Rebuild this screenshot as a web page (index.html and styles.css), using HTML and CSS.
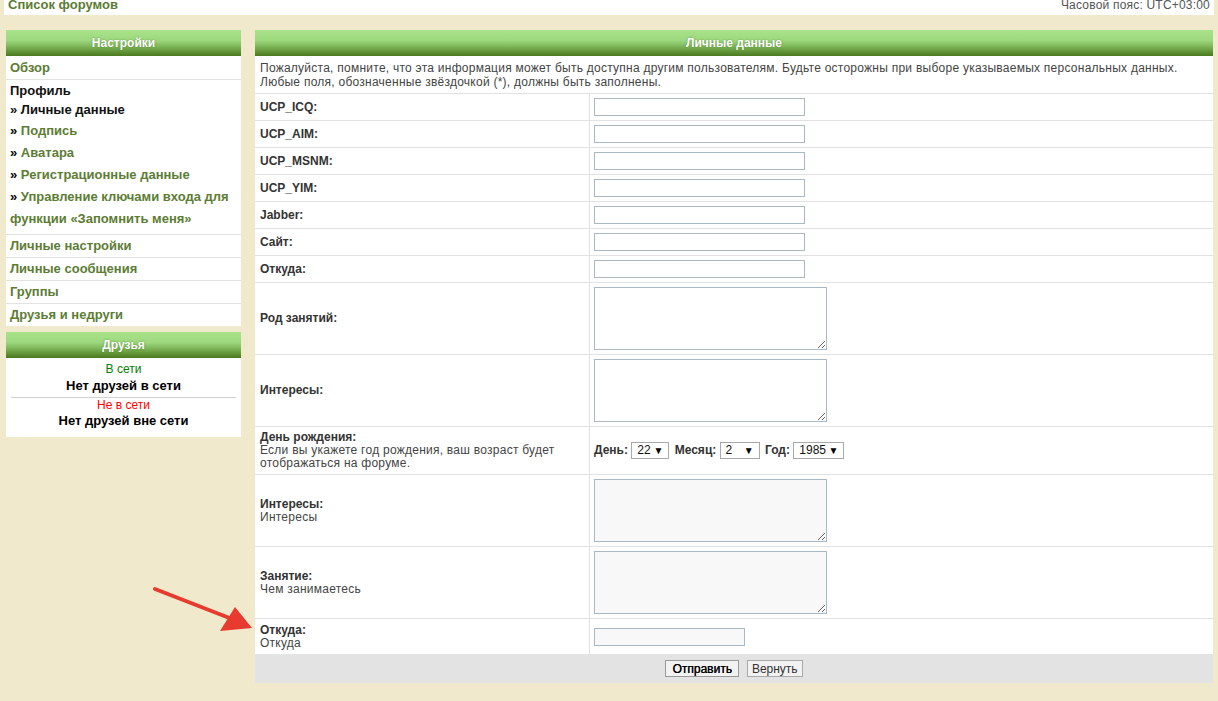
FILE: index.html
```html
<!DOCTYPE html>
<html>
<head>
    <title>Личные данные</title>
    <link rel="stylesheet" href="styles.css">
</head>
<body>
    <div class="topbar">
        <a class="forums" href="#">Список форумов</a>
        <span class="tz">Часовой пояс: UTC+03:00</span>
    </div>

    <div class="page">
        <div class="sidebar">
            <div class="panel">
                <div class="panel-head">Настройки</div>
                <ul class="menu">
                    <li><a href="#">Обзор</a></li>
                    <li class="group">
                        <div class="title">Профиль</div>
                        <div class="current">» Личные данные</div>
                        <div>» <a href="#">Подпись</a></div>
                        <div>» <a href="#">Аватара</a></div>
                        <div>» <a href="#">Регистрационные данные</a></div>
                        <div>» <a href="#">Управление ключами входа для функции «Запомнить меня»</a></div>
                    </li>
                    <li><a href="#">Личные настройки</a></li>
                    <li><a href="#">Личные сообщения</a></li>
                    <li><a href="#">Группы</a></li>
                    <li><a href="#">Друзья и недруги</a></li>
                </ul>
            </div>

            <div class="panel friends">
                <div class="panel-head">Друзья</div>
                <div class="friends-body">
                    <div class="online">В сети</div>
                    <div class="none">Нет друзей в сети</div>
                    <hr>
                    <div class="offline">Не в сети</div>
                    <div class="none">Нет друзей вне сети</div>
                </div>
            </div>
        </div>

        <div class="panel content">
            <div class="panel-head">Личные данные</div>
            <p class="intro">Пожалуйста, помните, что эта информация может быть доступна другим пользователям. Будьте осторожны при выборе указываемых персональных данных.<br>Любые поля, обозначенные звёздочкой (*), должны быть заполнены.</p>

            <table class="form">
                <tr>
                    <td class="label"><b>UCP_ICQ:</b></td>
                    <td class="field"><input type="text"></td>
                </tr>
                <tr>
                    <td class="label"><b>UCP_AIM:</b></td>
                    <td class="field"><input type="text"></td>
                </tr>
                <tr>
                    <td class="label"><b>UCP_MSNM:</b></td>
                    <td class="field"><input type="text"></td>
                </tr>
                <tr>
                    <td class="label"><b>UCP_YIM:</b></td>
                    <td class="field"><input type="text"></td>
                </tr>
                <tr>
                    <td class="label"><b>Jabber:</b></td>
                    <td class="field"><input type="text"></td>
                </tr>
                <tr>
                    <td class="label"><b>Сайт:</b></td>
                    <td class="field"><input type="text"></td>
                </tr>
                <tr>
                    <td class="label"><b>Откуда:</b></td>
                    <td class="field"><input type="text"></td>
                </tr>
                <tr>
                    <td class="label"><b>Род занятий:</b></td>
                    <td class="field"><textarea></textarea></td>
                </tr>
                <tr>
                    <td class="label"><b>Интересы:</b></td>
                    <td class="field"><textarea></textarea></td>
                </tr>
                <tr>
                    <td class="label"><b>День рождения:</b><br>Если вы укажете год рождения, ваш возраст будет отображаться на форуме.</td>
                    <td class="field birthday">
                        <b>День:</b> <span class="select day">22</span>
                        <b>Месяц:</b> <span class="select month">2</span>
                        <b>Год:</b> <span class="select year">1985</span>
                    </td>
                </tr>
                <tr>
                    <td class="label"><b>Интересы:</b><br>Интересы</td>
                    <td class="field"><textarea class="extra"></textarea></td>
                </tr>
                <tr>
                    <td class="label"><b>Занятие:</b><br>Чем занимаетесь</td>
                    <td class="field"><textarea class="extra"></textarea></td>
                </tr>
                <tr class="last">
                    <td class="label"><b>Откуда:</b><br>Откуда</td>
                    <td class="field"><input type="text" class="extra short"></td>
                </tr>
            </table>

            <div class="submit">
                <button class="primary">Отправить</button>
                <button>Вернуть</button>
            </div>
        </div>
    </div>

    <svg class="arrow" width="1218" height="701" viewBox="0 0 1218 701">
        <line x1="155" y1="589" x2="232" y2="619" stroke="#e63b2e" stroke-width="4" stroke-linecap="round"/>
        <polygon points="235,607 220,631 252,628" fill="#e63b2e"/>
    </svg>
</body>
</html>
```

FILE: styles.css
```css
body {
    margin: 0;
    background: #f1e9cc;
    font-family: "Liberation Sans", Arial, sans-serif;
    font-size: 12px;
    color: #333;
}

a {
    color: #5c7c35;
    text-decoration: none;
}

.topbar {
    margin: 0 4px;
    height: 15px;
    background: #fff;
    display: flex;
    justify-content: space-between;
    overflow: hidden;
    line-height: 10px;
}

.topbar .forums {
    font-size: 13px;
    font-weight: bold;
    padding-left: 4px;
}

.topbar .tz {
    color: #555;
    padding-right: 4px;
    letter-spacing: 0.2px;
}

.page {
    display: flex;
    gap: 14px;
    padding: 15px 5px 0 6px;
    align-items: flex-start;
}

.sidebar {
    width: 235px;
    display: flex;
    flex-direction: column;
    gap: 6px;
}

.panel {
    background: #fff;
}

.panel-head {
    height: 26px;
    line-height: 26px;
    text-align: center;
    color: #fff;
    font-weight: bold;
    font-size: 12px;
    text-shadow: 0 0 2px rgba(40, 80, 10, 0.5);
    background: linear-gradient(to bottom, #a9e28a 0%, #9dd87e 40%, #82bc5e 60%, #5f9034 85%, #4b7a20 100%);
}

.menu {
    list-style: none;
    margin: 0;
    padding: 0;
    font-size: 13px;
    font-weight: bold;
    color: #000;
}

.menu li {
    line-height: 22px;
    padding: 0 4px;
    border-bottom: 1px solid #e2e2e2;
}

.menu li:first-child {
    line-height: 23px;
}

.menu li:last-child {
    border-bottom: none;
}

.menu .group {
    padding: 2px 4px 4px;
}

.menu .title {
    line-height: 18px;
    color: #111;
}

.menu .current {
    line-height: 20px;
    color: #111;
}

.friends-body {
    text-align: center;
    padding: 4px 5px 7px;
}

.friends-body .online {
    color: #008000;
    line-height: 15px;
}

.friends-body .offline {
    color: #ff0000;
    line-height: 14px;
}

.friends-body .none {
    font-size: 13px;
    font-weight: bold;
    color: #000;
    line-height: 18px;
}

.friends-body hr {
    border: none;
    border-top: 1px solid #d0d0d0;
    margin: 2px 0 0;
}

.content {
    flex: 1;
}

.intro {
    margin: 0;
    padding: 5px 5px 4px;
    line-height: 14px;
    color: #444;
    letter-spacing: 0.25px;
}

.form {
    width: 100%;
    border-collapse: collapse;
}

.form td {
    border-top: 1px solid #e2e2e2;
    vertical-align: middle;
}

.form .label {
    width: 324px;
    padding: 4px 5px;
    line-height: 13px;
    color: #444;
    letter-spacing: 0.25px;
    border-right: 1px solid #e2e2e2;
}

.form .label b {
    color: #333;
    letter-spacing: 0;
}

.form .field {
    padding: 4px 4px;
}

.form .last .label {
    padding: 5px 5px 4px;
}

.form input {
    display: block;
    box-sizing: border-box;
    width: 211px;
    height: 18px;
    margin: 0;
    padding: 0 2px;
    border: 1px solid #a9b8c3;
    background: #fff;
}

.form input.short {
    width: 151px;
}

.form textarea {
    display: block;
    box-sizing: border-box;
    width: 233px;
    height: 63px;
    margin: 0;
    border: 1px solid #a9b8c3;
    background: #fff;
}

.form .extra {
    background: #f8f8f8;
}

.birthday b {
    color: #333;
}

.select {
    display: inline-block;
    box-sizing: border-box;
    height: 17px;
    line-height: 15px;
    padding-left: 5px;
    border: 1px solid #a9a9a9;
    background: #fff;
    color: #111;
    position: relative;
    vertical-align: middle;
    margin-right: 2px;
}

.select::after {
    content: "▼";
    position: absolute;
    right: 5px;
    top: 0;
    font-size: 10px;
    color: #000;
}

.select.day {
    width: 38px;
}

.select.month {
    width: 40px;
}

.select.year {
    width: 51px;
}

.submit {
    background: #e3e3e3;
    height: 29px;
    display: flex;
    justify-content: center;
    align-items: center;
    gap: 8px;
}

.submit button {
    font-family: "Liberation Sans", Arial, sans-serif;
    font-size: 12px;
    height: 17px;
    padding: 0 4px;
    border: 1px solid #aaa;
    background: #f2f2f2;
    color: #333;
    line-height: 14px;
}

.submit button.primary {
    padding: 0 6px;
    border-color: #999;
    color: #000;
    text-shadow: 0.3px 0 0 #000;
}

.arrow {
    position: absolute;
    top: 0;
    left: 0;
    pointer-events: none;
}
```
